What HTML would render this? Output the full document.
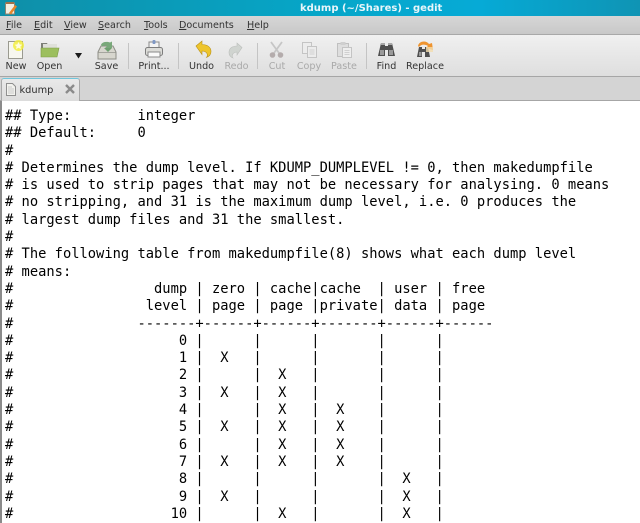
<!DOCTYPE html>
<html><head><meta charset="utf-8">
<style>
html,body{margin:0;padding:0;width:640px;height:523px;overflow:hidden;background:#fff}
#w{position:relative;width:640px;height:523px;overflow:hidden;filter:blur(.35px);font-family:"DejaVu Sans",sans-serif}
.a{position:absolute}
#title{left:0;top:0;width:640px;height:16px;background:linear-gradient(90deg,#0f8fa8 0%,#06a6c8 50%,#06aad6 75%,#0f94b4 100%)}
#title .t{position:absolute;left:300px;top:2px;color:#e8f6fa;font-size:10px;font-weight:bold;line-height:14px;white-space:nowrap}
#menu{left:0;top:16px;width:640px;height:19px;background:linear-gradient(#d6d6d6,#c8c8c8);border-bottom:1px solid #a8a8a8;box-sizing:border-box}
#menu span{position:absolute;top:3px;font-size:9.6px;line-height:14px;color:#333}
#menu u{text-decoration:underline}
#tb{left:0;top:35px;width:640px;height:42px;background:linear-gradient(#f0f0f0,#dedede);border-bottom:1px solid #a6a6a6;box-sizing:border-box}
.l{position:absolute;top:60px;font-size:9.6px;line-height:13px;color:#333;text-align:center;transform:translateX(-50%);white-space:nowrap}
.d{color:#a9a9a9}
.s{position:absolute;top:43px;width:1px;height:26px;background:#c4c4c4}
#tabs{left:0;top:77px;width:640px;height:24px;background:#d4d4d4;border-bottom:1px solid #a6a6a6;box-sizing:border-box}
#tab{left:1px;top:78px;width:79px;height:23px;background:linear-gradient(#e9e9e9,#dcdcdc);border:1px solid #a8a8a8;border-top:1px solid #6fc6dc;border-bottom:none;border-radius:3px 3px 0 0;box-sizing:border-box}
#doc{left:0;top:101px;width:640px;height:422px;background:#fff}
#bar{left:0;top:101px;width:2px;height:422px;background:#8a8a8a}
pre{position:absolute;left:5px;top:108px;margin:0;font-family:"DejaVu Sans Mono",monospace;font-size:13.75px;line-height:17.3px;color:#000;letter-spacing:0}
svg{position:absolute;overflow:visible}
</style></head><body><div id="w">

<div class="a" id="title"><div class="t">kdump (~/Shares) - gedit</div></div>
<svg style="left:4px;top:1px" width="14" height="14" viewBox="0 0 14 14"><rect x="1.5" y="2" width="9" height="11" fill="#f4efe2" stroke="#8d8672"/><path d="M2 2h8" stroke="#a0714a" stroke-width="2"/><path d="M5 12l6-8 2 1.5-6 8z" fill="#e8862a"/></svg>

<div class="a" id="menu">
<span style="left:6px"><u>F</u>ile</span>
<span style="left:34px"><u>E</u>dit</span>
<span style="left:64px"><u>V</u>iew</span>
<span style="left:98px"><u>S</u>earch</span>
<span style="left:144px"><u>T</u>ools</span>
<span style="left:179px"><u>D</u>ocuments</span>
<span style="left:247px"><u>H</u>elp</span>
</div>

<div class="a" id="tb"></div>

<!-- New -->
<svg style="left:8px;top:41px" width="17" height="18" viewBox="0 0 17 18"><rect x=".5" y=".5" width="14" height="17" fill="#f7f7ef" stroke="#9a9a90"/><circle cx="10.5" cy="4.5" r="5.5" fill="#f3ee40" opacity=".85"/><path d="M10.5 1l1.2 2.4 2.6.3-1.9 1.8.5 2.6-2.4-1.3-2.4 1.3.5-2.6-1.9-1.8 2.6-.3z" fill="#fffde0"/></svg>
<!-- Open -->
<svg style="left:40px;top:41px" width="20" height="18" viewBox="0 0 20 18"><path d="M1 2h6l1 2h8v4H1z" fill="#7d7f78"/><rect x="3" y="3" width="14" height="5" fill="#dfe0da"/><path d="M1 16V7h18l-2 9z" fill="#9cbf5e" stroke="#7d9b45" stroke-width=".6"/></svg>
<svg style="left:74px;top:52px" width="9" height="7" viewBox="0 0 9 7"><path d="M1 1h7L4.5 6.500z" fill="#1c1c1c"/></svg>
<!-- Save -->
<svg style="left:97px;top:40px" width="20" height="20" viewBox="0 0 20 20"><path d="M1 12l3-6h12l3 6v7H1z" fill="#d7d6ce" stroke="#8d8d86"/><path d="M1.500 12.500h17" stroke="#a5a59e"/><path d="M4 4.500a6 4 0 0 1 9-2l2-1v6.500h-7l2-1.800a3.500 2.500 0 0 0-5 .5z" fill="#79a87a"/><path d="M7 8h8l-4 4z" fill="#6f9f70"/></svg>
<div class="s" style="left:128px"></div>
<!-- Print -->
<svg style="left:144px;top:40px" width="20" height="19" viewBox="0 0 20 19"><rect x="5" y="2" width="10" height="7" fill="#f3f3f3" stroke="#8a8a8a"/><rect x="8.500" y="0" width="3" height="4" rx="1" fill="#7f98c4"/><rect x="1.500" y="7.500" width="17" height="8" rx="2" fill="#dcdcd8" stroke="#7d7d7d"/><rect x="4" y="12" width="12" height="5" fill="#fafafa" stroke="#8a8a8a"/></svg>
<div class="s" style="left:178px"></div>
<!-- Undo -->
<svg style="left:195px;top:40px" width="17" height="19" viewBox="0 0 17 19"><path d="M1 6L7 1v3.500c5 0 9 2.500 9 7 0 3-2 5-4.500 6 1.500-2 1.500-6-4.500-6.500v3.500z" fill="#eec52c" stroke="#b8911a" stroke-width=".6"/></svg>
<!-- Redo -->
<svg style="left:228px;top:42px" width="15" height="17" viewBox="0 0 15 17"><path d="M14 5.500L9 1v3C4 4 1 6.500 1 10.500c0 2.500 1.500 4.500 4 5.500-1.500-2-1-5.500 4-6v3z" fill="#d0d4d0" stroke="#bcbfbc" stroke-width=".6"/></svg>
<div class="s" style="left:257px"></div>
<!-- Cut -->
<svg style="left:269px;top:41px" width="15" height="18" viewBox="0 0 15 18"><path d="M2 1l8 11M13 1L5 12" stroke="#c6c6c6" stroke-width="1.800" fill="none"/><circle cx="3.500" cy="14" r="2.800" fill="#b4acac"/><circle cx="11.500" cy="14" r="2.800" fill="#b4acac"/></svg>
<!-- Copy -->
<svg style="left:302px;top:42px" width="15" height="16" viewBox="0 0 15 16"><rect x=".5" y=".5" width="9" height="11" fill="#ececec" stroke="#c4c4c4"/><rect x="5.500" y="4.500" width="9" height="11" fill="#ececec" stroke="#c4c4c4"/><path d="M7.500 8h5M7.500 10h5M7.500 12h5" stroke="#d0d0d0"/></svg>
<!-- Paste -->
<svg style="left:337px;top:42px" width="15" height="16" viewBox="0 0 15 16"><rect x=".5" y="1.500" width="11" height="13" fill="#dedede" stroke="#c0c0c0"/><rect x="3.500" y="0" width="5" height="3" fill="#cfcfcf"/><rect x="5.500" y="5.500" width="9" height="10" fill="#eee" stroke="#c4c4c4"/><path d="M7.500 8.500h5M7.500 10.500h5M7.500 12.500h5" stroke="#d0d0d0"/></svg>
<div class="s" style="left:366px"></div>
<!-- Find -->
<svg style="left:378px;top:42px" width="17" height="15" viewBox="0 0 17 15"><path d="M3 1h4v3h3V1h4l3 13h-7V8H7v6H0z" fill="#4f4f4f"/><rect x="2" y="8" width="4" height="5" fill="#9a9a9a"/><rect x="11" y="8" width="4" height="5" fill="#9a9a9a"/><path d="M3 1h4v2H3zM10 1h4v2h-4z" fill="#a8a8a8"/></svg>
<!-- Replace -->
<svg style="left:416px;top:41px" width="18" height="17" viewBox="0 0 18 17"><path d="M3 6h3v2h3V6h3l2 10H9V11H6v5H1z" fill="#4f4f4f"/><rect x="3" y="11" width="2.500" height="4" fill="#999"/><path d="M2 5C3 0 10-1 13 3l3-1 1 7-7-2 2-2C9 3 5 3 3 6z" fill="#ee9430"/><rect x="10" y="6" width="7" height="5" fill="#f3dcae" opacity=".8"/></svg>

<div class="l" style="left:16px">New</div>
<div class="l" style="left:49.500px">Open</div>
<div class="l" style="left:106.500px">Save</div>
<div class="l" style="left:154px">Print...</div>
<div class="l" style="left:201.500px">Undo</div>
<div class="l d" style="left:236.500px">Redo</div>
<div class="l d" style="left:277px">Cut</div>
<div class="l d" style="left:309px">Copy</div>
<div class="l d" style="left:344px">Paste</div>
<div class="l" style="left:386.500px">Find</div>
<div class="l" style="left:425px">Replace</div>

<div class="a" id="tabs"></div>
<div class="a" id="tab"></div>
<svg style="left:6px;top:83px" width="10" height="13" viewBox="0 0 10 13"><path d="M.5.500h6l3 3v9h-9z" fill="#f2f2ee" stroke="#8f8f8f"/><path d="M2 4h4M2 6h6M2 8h6M2 10h6" stroke="#bdbdbd" stroke-width=".7"/></svg>
<div class="a" style="left:19.500px;top:84px;font-size:9.800px;line-height:14px;color:#2c2c2c">kdump</div>
<svg style="left:65px;top:84px" width="10" height="10" viewBox="0 0 10 10"><path d="M1 1l8 8M9 1L1 9" stroke="#8b8b8b" stroke-width="2.400"/></svg>

<div class="a" id="doc"></div>
<div class="a" id="bar"></div>
<pre>## Type:        integer
## Default:     0
#
# Determines the dump level. If KDUMP_DUMPLEVEL != 0, then makedumpfile
# is used to strip pages that may not be necessary for analysing. 0 means
# no stripping, and 31 is the maximum dump level, i.e. 0 produces the
# largest dump files and 31 the smallest.
#
# The following table from makedumpfile(8) shows what each dump level
# means:
#                 dump | zero | cache|cache  | user | free
#                level | page | page |private| data | page
#               -------+------+------+-------+------+------
#                    0 |      |      |       |      |
#                    1 |  X   |      |       |      |
#                    2 |      |  X   |       |      |
#                    3 |  X   |  X   |       |      |
#                    4 |      |  X   |  X    |      |
#                    5 |  X   |  X   |  X    |      |
#                    6 |      |  X   |  X    |      |
#                    7 |  X   |  X   |  X    |      |
#                    8 |      |      |       |  X   |
#                    9 |  X   |      |       |  X   |
#                   10 |      |  X   |       |  X   |</pre>
</div></body></html>
